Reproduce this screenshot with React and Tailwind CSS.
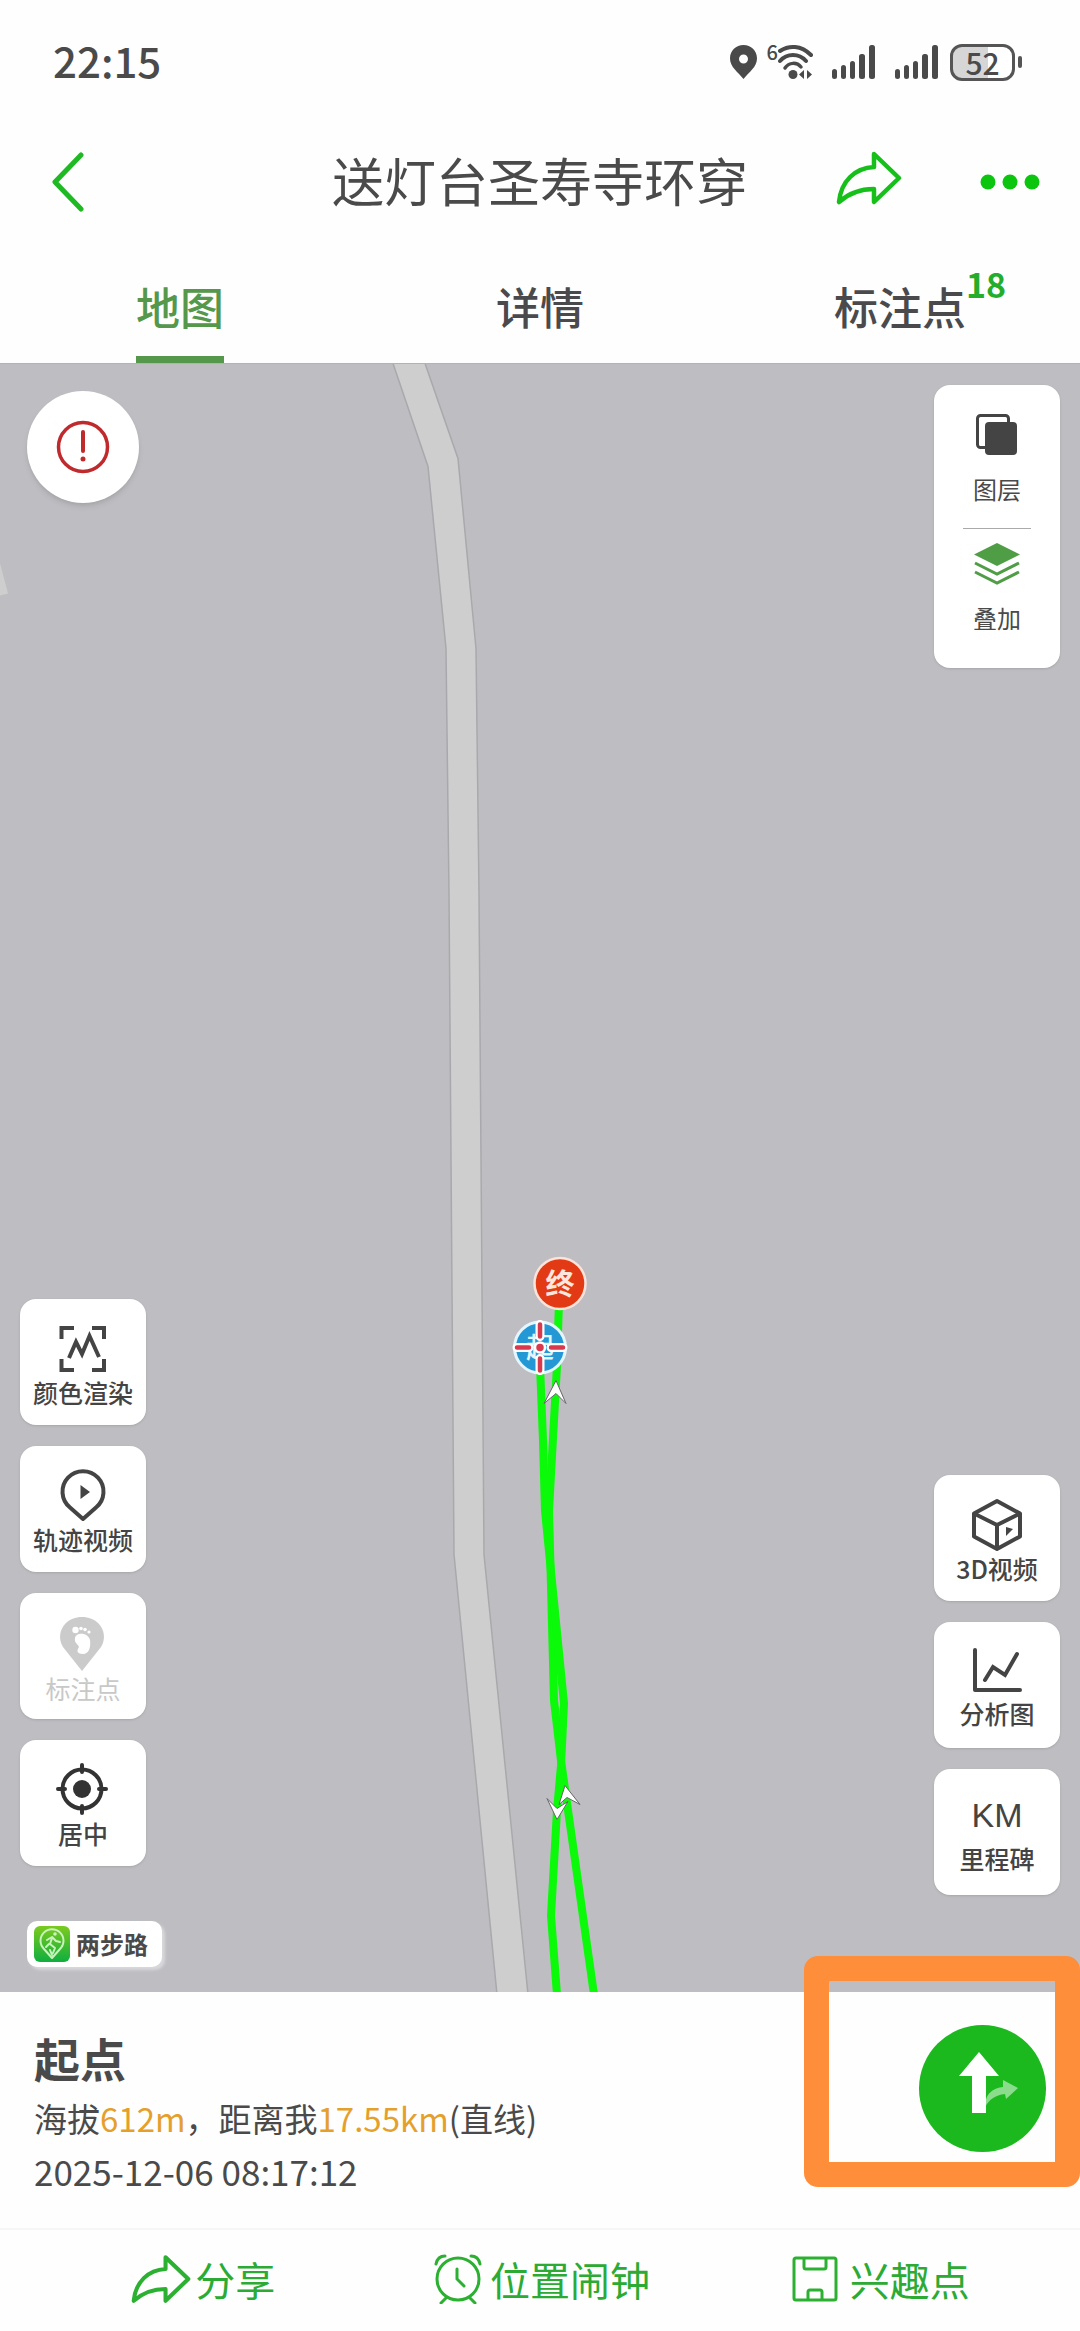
import { useState } from 'react';

const TABS = [
  { key: 'map', label: '地图' },
  { key: 'detail', label: '详情' },
  { key: 'points', label: '标注点', count: 18 },
];

function Signal() {
  return (
    <svg width="43" height="34" viewBox="0 0 43 34" fill="#4a4a4a">
      <rect x="0" y="24" width="5" height="10" rx="2.5" />
      <rect x="9" y="20" width="5" height="14" rx="2.5" />
      <rect x="18" y="16" width="5" height="18" rx="2.5" />
      <rect x="27" y="9" width="6" height="25" rx="2.5" />
      <rect x="37" y="0" width="6" height="34" rx="2.5" />
    </svg>
  );
}

function StatusBar() {
  return (
    <div className="flex items-center justify-between h-[124px] pl-[53px] pr-[58px] text-[#4a4a4a]">
      <span className="pb-1 text-[42px] leading-[48px] font-medium">22:15</span>
      <div className="flex items-center">
        <svg width="27" height="34" viewBox="0 0 27 34" fill="#4a4a4a">
          <path fillRule="evenodd" d="M13.500 0C6 0 0 5.500 0 13.500C0 22 8 27 13.500 34C19 27 27 22 27 13.500C27 5.500 21 0 13.500 0ZM13.500 9.500a4.500 4.500 0 1 1 0 9a4.500 4.500 0 1 1 0-9Z" />
        </svg>
        {/* wifi 6 */}
        <div className="flex ml-[10px]">
          <span className="text-[20px] leading-[16px] font-medium">6</span>
          <svg width="36" height="36" viewBox="0 0 36 36" fill="none" stroke="#4a4a4a" strokeWidth="4" strokeLinecap="round">
            <path d="M2 7C11 1 23 1 33 11" />
            <path d="M2 17C9 9 21 9 28 17" />
            <path d="M7 24C11 18 19 18 23 23" strokeWidth="3.500" />
            <circle cx="15" cy="30.500" r="4.500" fill="#4a4a4a" stroke="none" />
            <path d="M26 26v9l-5-4.500zM29 26v9l5-4.500z" fill="#4a4a4a" stroke="none" />
          </svg>
        </div>
        <div className="flex gap-5 ml-[18px]">
          <Signal />
          <Signal />
        </div>
        <div className="flex items-center ml-3">
          <div className="flex items-center justify-center w-[65px] h-[37px] border-[3px] border-[#555] rounded-[12px] bg-linear-to-r from-[#d6d6d6] from-60% to-white to-60% text-[30px] leading-[30px] font-medium">
            52
          </div>
          <div className="w-[4px] h-[12px] ml-[3px] rounded-full bg-[#555]" />
        </div>
      </div>
    </div>
  );
}

function ShareArrow({ className, color, stroke }) {
  return (
    <svg className={className} viewBox="0 0 66 54" fill="none" stroke={color} strokeWidth={stroke} strokeLinejoin="round">
      <path d="M38 3L63 27L38 51V38C23 38 13 42 3 51C5 30 19 17 38 16Z" />
    </svg>
  );
}

function TitleBar() {
  return (
    <header className="grid grid-cols-[1fr_auto_1fr] items-center h-[116px] px-[40px]">
      <button type="button" aria-label="返回" className="justify-self-start pl-3">
        <svg width="34" height="60" viewBox="0 0 34 60" fill="none" stroke="#1fb923" strokeWidth="5" strokeLinecap="round" strokeLinejoin="round">
          <path d="M29 3L3 30L29 57" />
        </svg>
      </button>
      <h1 className="pb-1 text-[52px] leading-[64px] text-[#4a4a4a]">送灯台圣寿寺环穿</h1>
      <div className="flex items-center justify-self-end gap-[78px]">
        <button type="button" aria-label="分享" className="pb-2">
          <ShareArrow className="w-[66px] h-[54px]" color="#17bf1b" stroke="4.500" />
        </button>
        <button type="button" aria-label="更多">
          <svg width="60" height="16" viewBox="0 0 60 16" fill="#0cc50f">
            <circle cx="8" cy="8" r="7.500" />
            <circle cx="30" cy="8" r="7.500" />
            <circle cx="52" cy="8" r="7.500" />
          </svg>
        </button>
      </div>
    </header>
  );
}

function Tabs({ active, onChange }) {
  return (
    <nav className="grid grid-cols-3 h-[123px]">
      {TABS.map((tab) => (
        <div key={tab.key} className="flex justify-center">
          <button
            type="button"
            onClick={() => onChange(tab.key)}
            className={
              'relative h-full pt-4 border-b-[7px] text-[44px] leading-[52px] font-medium ' +
              (active === tab.key ? 'text-[#55984c] border-[#55984c]' : 'text-[#4a4a4d] border-transparent')
            }
          >
            {tab.label}
            {tab.count && (
              <span className="absolute left-full top-6 text-[34px] leading-[40px] font-bold text-[#24ad2b]">
                {tab.count}
              </span>
            )}
          </button>
        </div>
      ))}
    </nav>
  );
}

function MapCanvas() {
  return (
    <svg className="absolute inset-0 w-full h-full" viewBox="0 363 1080 1629" preserveAspectRatio="xMidYMid slice">
      <path d="M0 563L8 593L0 595Z" fill="#cecece" />
      {/* road */}
      <path
        d="M392 360L428 466L446 648L449 893L454 1554L497 1994H528L484 1554L479 893L476 648L458 458L424 360Z"
        fill="#cecece"
        stroke="#a9a9ad"
        strokeWidth="1.500"
      />
      {/* track */}
      <g fill="none" stroke="#0afa0a" strokeWidth="8" strokeLinejoin="round">
        <path d="M559 1300L557 1365L549 1510L554 1700L561 1760L594 1994" />
        <path d="M540 1365L543 1440L545 1510L564 1703L561 1765L557 1810L551 1915L557 1994" />
      </g>
      <g fill="#fff" stroke="#666" strokeWidth="1">
        <path d="M556 1380L544 1403L556 1393L566 1403Z" />
        <path d="M565 1785L559 1804L567 1797L580 1804Z" />
        <path d="M557 1819L547 1798L557 1808L568 1801Z" />
      </g>
      {/* end marker */}
      <circle cx="560" cy="1283" r="25.500" fill="#e23a15" stroke="#fce3da" strokeWidth="2.500" />
      <text x="560" y="1294" textAnchor="middle" fontSize="29" fontWeight="700" fill="#fde6dc">终</text>
      {/* start marker with the position cross on top */}
      <circle cx="540" cy="1347" r="25.500" fill="#2498d5" stroke="#e4f6fd" strokeWidth="3" />
      <text x="540" y="1357" textAnchor="middle" fontSize="28" fontWeight="500" fill="#e4f6fd">起</text>
      <g strokeLinecap="round" fill="none">
        <path d="M540 1324V1336M540 1358V1370M517 1347H529M551 1347H563" stroke="#fff" strokeWidth="9" />
        <path d="M540 1324V1336M540 1358V1370M517 1347H529M551 1347H563" stroke="#d8394c" strokeWidth="4.500" />
      </g>
      <circle cx="540" cy="1347" r="5" fill="#d8394c" stroke="#fff" strokeWidth="2.500" />
    </svg>
  );
}

function ToolCard({ icon, label, disabled }) {
  return (
    <button
      type="button"
      disabled={disabled}
      className={
        'flex flex-col items-center w-[126px] h-[126px] pt-[23px] rounded-[16px] bg-white shadow-sm text-[25px] leading-[32px] ' +
        (disabled ? 'text-[#c8c8c8]' : 'text-[#444] font-medium')
      }
    >
      {icon}
      <span className="whitespace-nowrap">{label}</span>
    </button>
  );
}

const ColorIcon = (
  <svg width="54" height="54" viewBox="0 0 54 54" fill="none" stroke="#444" strokeWidth="4">
    <path d="M5.500 17V6H18M36 6H48V17M48 37V48H36M18 48H5.500V37" />
    <path d="M13 36L20 20L26 32L33.500 14L43 35" strokeLinejoin="miter" />
  </svg>
);

const VideoPinIcon = (
  <svg width="54" height="54" viewBox="0 0 54 54" fill="none" stroke="#444" strokeWidth="4" strokeLinejoin="round">
    <path d="M27 50L14 38.500A20.500 20.500 0 1 1 40 38.500Z" />
    <path d="M24.500 16V30L34 23Z" fill="#444" stroke="none" />
  </svg>
);

const FootPinIcon = (
  <svg width="54" height="56" viewBox="0 0 54 56">
    <path d="M26 55L7 31C-1 18 8 1 26 1S53 18 45 31Z" fill="#cbcbcb" />
    <g fill="#fff">
      <path d="M19 22C20 16 32 16 34 24C35 31 33 38 27 38C20 38 21 34 23 31C22 28 18 27 19 22Z" />
      <circle cx="19.500" cy="14" r="3.200" />
      <circle cx="25" cy="12.500" r="1.800" />
      <circle cx="29" cy="13.500" r="1.800" />
      <circle cx="33" cy="16" r="1.600" />
    </g>
  </svg>
);

const CenterIcon = (
  <svg width="54" height="54" viewBox="0 0 54 54" fill="none" stroke="#333" strokeWidth="4" strokeLinecap="round">
    <circle cx="26" cy="26" r="19.500" />
    <circle cx="26" cy="26" r="9" fill="#333" stroke="none" />
    <path d="M26 2V9M26 43V50M2 26H9M43 26H50" />
  </svg>
);

const CubeIcon = (
  <svg width="54" height="54" viewBox="0 0 54 54" fill="none" stroke="#444" strokeWidth="4" strokeLinejoin="round">
    <path d="M27 3L50 15.500V38.500L27 51L4 38.500V15.500Z" />
    <path d="M4 15.500L27 27L50 15.500M27 27V51" />
    <path d="M36 29V38L43 31Z" fill="#444" stroke="none" />
  </svg>
);

const ChartIcon = (
  <svg width="54" height="52" viewBox="0 0 54 52" fill="none" stroke="#444" strokeWidth="4" strokeLinecap="round" strokeLinejoin="round">
    <path d="M5 5V45H50" />
    <path d="M15 35L23 22L35 30L47 9" strokeLinejoin="miter" />
  </svg>
);

function LayerPanel() {
  return (
    <div className="absolute right-[20px] top-[21px] flex flex-col items-center w-[126px] h-[283px] pt-[27px] rounded-[16px] bg-white shadow-sm text-[24px] leading-[34px] text-[#4a4a4a]">
      <button type="button" className="flex flex-col items-center gap-4">
        <svg width="44" height="44" viewBox="0 0 44 44">
          <rect x="2.500" y="3.500" width="31" height="32" rx="3" fill="none" stroke="#444" strokeWidth="3" />
          <rect x="10" y="10" width="32" height="33" rx="4" fill="#444" />
        </svg>
        <span>图层</span>
      </button>
      <div className="w-[68px] h-px mt-[22px] bg-[#aaa]" />
      <button type="button" className="flex flex-col items-center gap-3 pt-[12px]">
        <svg width="48" height="48" viewBox="0 0 48 48">
          <path d="M24 2L47 13.500L24 25L1 13.500Z" fill="#4f9d45" />
          <path d="M2 22L24 33L46 22M2 31L24 42L46 31" fill="none" stroke="#4f9d45" strokeWidth="3" />
        </svg>
        <span>叠加</span>
      </button>
    </div>
  );
}

function Brand() {
  return (
    <div className="absolute left-[27px] bottom-[25px] flex items-center gap-[6px] h-[46px] px-[7px] pr-[14px] rounded-[10px] bg-white shadow-[3px_3px_3px_#d8d8dc] text-[24px] leading-[36px] font-bold text-[#4a4a4a]">
      <svg width="36" height="36" viewBox="0 0 36 36" fill="none" strokeLinecap="round" strokeLinejoin="round">
        <defs>
          <linearGradient id="brand" x1="0" y1="0" x2="0" y2="1">
            <stop offset="0" stopColor="#7ccb1e" />
            <stop offset="1" stopColor="#0fae3f" />
          </linearGradient>
        </defs>
        <rect width="36" height="36" rx="6" fill="url(#brand)" />
        <path d="M18 32L10 23A11.500 11.500 0 1 1 26 23Z" stroke="#c9f2bd" strokeWidth="2" />
        <path d="M13 14L18 11L22 15L26 16M18 12L16 18L21 22L19 27M15 18L12 21M16 24L18 29" stroke="#c9f2bd" strokeWidth="2" />
        <circle cx="21" cy="8" r="1.800" fill="#c9f2bd" />
      </svg>
      <span>两步路</span>
    </div>
  );
}

function MapView() {
  return (
    <main className="relative flex-1 min-h-[1200px] bg-[#bebdc2] border-t border-[#b2b1b5] overflow-hidden">
      <MapCanvas />
      <button
        type="button"
        aria-label="提示"
        className="absolute left-[27px] top-[27px] flex items-center justify-center w-[112px] h-[112px] rounded-full bg-white shadow-md"
      >
        <svg width="54" height="54" viewBox="0 0 54 54" fill="none" stroke="#bf2a2d" strokeWidth="4" strokeLinecap="round">
          <circle cx="27" cy="27" r="24.500" strokeWidth="3.500" />
          <path d="M27 12V31" />
          <circle cx="27" cy="39" r="2.500" fill="#bf2a2d" stroke="none" />
        </svg>
      </button>
      <LayerPanel />
      <div className="absolute left-[20px] bottom-[126px] flex flex-col gap-[21px]">
        <ToolCard icon={ColorIcon} label="颜色渲染" />
        <ToolCard icon={VideoPinIcon} label="轨迹视频" />
        <ToolCard icon={FootPinIcon} label="标注点" disabled />
        <ToolCard icon={CenterIcon} label="居中" />
      </div>
      <div className="absolute right-[20px] bottom-[97px] flex flex-col gap-[21px]">
        <ToolCard icon={CubeIcon} label="3D视频" />
        <ToolCard icon={ChartIcon} label="分析图" />
        <ToolCard
          icon={<span className="h-[50px] font-['Liberation_Sans',sans-serif] text-[34px] leading-[46px]">KM</span>}
          label="里程碑"
        />
      </div>
      <Brand />
    </main>
  );
}

function PointInfo() {
  return (
    <section className="relative flex justify-between h-[236px] pt-[33px] px-[34px] text-[#4a4a4a]">
      <div>
        <h2 className="text-[46px] leading-[64px] font-bold">起点</h2>
        <p className="text-[33px] leading-[58px]">
          海拔<span className="text-[#e5a02c]">612m</span>，距离我<span className="text-[#e5a02c]">17.55km</span>(直线)
        </p>
        <p className="text-[35px] leading-[48px]">2025-12-06 08:17:12</p>
      </div>
      <button type="button" aria-label="导航" className="self-start">
        <svg width="127" height="127" viewBox="0 0 127 127">
          <circle cx="63.500" cy="63.500" r="63.500" fill="#1cb91e" />
          <path d="M66 82C66 68 75 63 84 62V55L99 63L87 74L86 69C76 70 70 75 66 82Z" fill="#8bdd8d" />
          <path d="M60 27L80 51H67V88H53V51H40Z" fill="#fff" />
        </svg>
      </button>
      {/* highlight frame round the navigation button */}
      <div className="absolute right-0 -top-[36px] w-[276px] h-[231px] rounded-[14px] border-[25px] border-[#ff8e3b] pointer-events-none" />
    </section>
  );
}

function BottomBar() {
  return (
    <footer className="grid grid-cols-3 h-[103px] pl-[34px] pr-[30px] pb-1 border-t-2 border-[#f6f6f6] text-[40px] leading-[48px] text-[#2bab33]">
      <button type="button" className="flex items-center justify-center gap-1">
        <ShareArrow className="w-[60px] h-[50px]" color="#2bb031" stroke="4.500" />
        分享
      </button>
      <button type="button" className="flex items-center justify-center gap-2">
        <svg width="48" height="50" viewBox="0 0 48 50" fill="none" stroke="#2bb031" strokeWidth="3" strokeLinecap="round">
          <circle cx="24" cy="25" r="21" />
          <path d="M23 15V25L30 32M12 44L7 49M36 44L41 49M2 10C3 5 6 2 11 2M37 2C42 2 45 5 46 10" />
        </svg>
        位置闹钟
      </button>
      <button type="button" className="flex items-center justify-center gap-3">
        <svg width="46" height="46" viewBox="0 0 46 46" fill="none" stroke="#2bb031" strokeWidth="3" strokeLinejoin="round">
          <rect x="2" y="2" width="42" height="42" rx="2" />
          <path d="M12 2V11Q12 13 14 13H32Q34 13 34 11V2M16 44V36Q16 34 18 34H28Q30 34 30 36V44" />
        </svg>
        兴趣点
      </button>
    </footer>
  );
}

export default function App() {
  const [tab, setTab] = useState('map');

  return (
    <div className="flex flex-col min-h-screen bg-[#fefefe] font-['Noto_Sans_CJK_SC',sans-serif]">
      <StatusBar />
      <TitleBar />
      <Tabs active={tab} onChange={setTab} />
      <MapView />
      <PointInfo />
      <BottomBar />
    </div>
  );
}
